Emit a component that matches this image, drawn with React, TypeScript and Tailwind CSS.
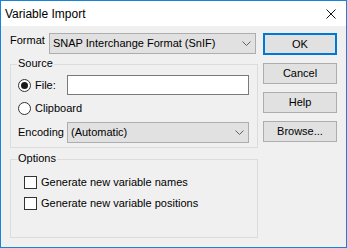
import React from 'react';

const RadioDot = ({ checked }: { checked?: boolean }) => (
    <svg width="13" height="13" viewBox="0 0 13 13" className="shrink-0">
        <circle cx="6.5" cy="6.5" r="6" fill="#ffffff" stroke="#333333" strokeWidth="1" />
        {checked && <circle cx="6.5" cy="6.5" r="3.5" fill="#1a1a1a" />}
    </svg>
);

const CheckBox = () => (
    <span className="block w-[13px] h-[13px] shrink-0 border border-[#333333] bg-white" />
);

const Chevron = () => (
    <svg width="9" height="5" viewBox="0 0 9 5" className="shrink-0">
        <polyline points="0.5,0.5 4.5,4.5 8.5,0.5" fill="none" stroke="#606060" strokeWidth="1" />
    </svg>
);

const Combo = ({ value, className }: { value: string; className?: string }) => (
    <div className={`h-[21px] flex items-center justify-between bg-[#e1e1e1] border border-[#adadad] pl-[3px] pr-[4px] ${className ?? ''}`}>
        <span className="whitespace-nowrap">{value}</span>
        <Chevron />
    </div>
);

const Button = ({ label, primary, className }: { label: string; primary?: boolean; className?: string }) => (
    <button
        type="button"
        className={`w-[74px] h-[21px] flex items-center justify-center bg-[#e1e1e1] ${primary ? 'border-2 border-[#0078d7]' : 'border border-[#adadad]'} ${className ?? ''}`}
    >
        {label}
    </button>
);

export default function App() {
    return (
        <div
            className="w-[347px] h-[248px] flex flex-col border border-[#1883d7] bg-[#f0f0f0] text-[11px] leading-[13px] text-black"
            style={{ fontFamily: '"Liberation Sans", Arial, sans-serif' }}
        >
            <div className="h-[25px] flex items-center justify-between bg-white pl-[4px] pr-[10px]">
                <span className="text-[12px] leading-[14px]">Variable Import</span>
                <svg width="10" height="10" viewBox="0 0 10 10">
                    <path d="M0.5 0.5 L9.5 9.5 M9.5 0.5 L0.5 9.5" stroke="#111111" strokeWidth="1" />
                </svg>
            </div>

            <div className="flex pl-[9px] pt-[7px]">
                {/* left column */}
                <div className="w-[248px] flex flex-col">
                    <div className="flex items-start">
                        <span className="w-[39px] pt-[1px]">Format</span>
                        <Combo value="SNAP Interchange Format (SnIF)" className="w-[207px]" />
                    </div>

                    <div className="relative mt-[10px] border border-[#dcdcdc] pl-[7px] pr-[8px] pt-[10px] pb-[4px]">
                        <span className="absolute -top-[8px] left-[6px] px-[1px] bg-[#f0f0f0]">Source</span>
                        <div className="flex items-center">
                            <div className="w-[49px] flex items-center gap-[4px]">
                                <RadioDot checked />
                                <span>File:</span>
                            </div>
                            <div className="flex-1 h-[20px] bg-white border border-[#7a7a7a]" />
                        </div>
                        <div className="mt-[7px] flex items-center gap-[4px]">
                            <RadioDot />
                            <span>Clipboard</span>
                        </div>
                        <div className="mt-[7px] flex items-center">
                            <span className="w-[49px]">Encoding</span>
                            <Combo value="(Automatic)" className="flex-1" />
                        </div>
                    </div>

                    <div className="relative mt-[11px] border border-[#dcdcdc] pl-[13px] pt-[16px] pb-[27px]">
                        <span className="absolute -top-[8px] left-[6px] px-[1px] bg-[#f0f0f0]">Options</span>
                        <div className="flex items-center gap-[4px]">
                            <CheckBox />
                            <span>Generate new variable names</span>
                        </div>
                        <div className="mt-[8px] flex items-center gap-[4px]">
                            <CheckBox />
                            <span>Generate new variable positions</span>
                        </div>
                    </div>
                </div>

                {/* right column */}
                <div className="ml-[5px] flex flex-col">
                    <Button label="OK" primary className="h-[22px]" />
                    <Button label="Cancel" className="mt-[8px]" />
                    <Button label="Help" className="mt-[8px]" />
                    <Button label="Browse..." className="mt-[8px]" />
                </div>
            </div>
        </div>
    );
}
